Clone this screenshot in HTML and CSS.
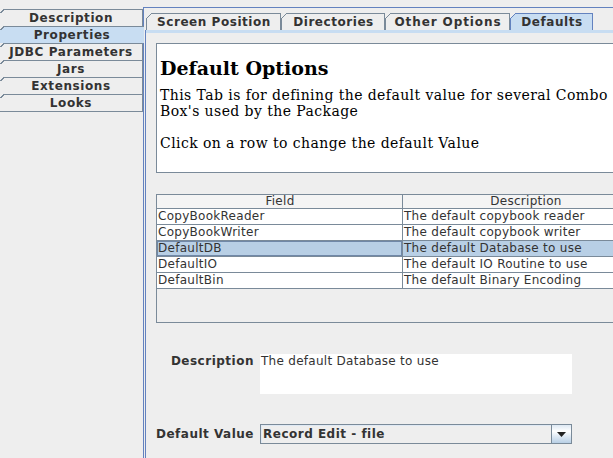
FILE: index.html
```html
<!DOCTYPE html>
<html>
<head>
<meta charset="utf-8">
<link rel="stylesheet" href="styles.css">
</head>
<body>
<div class="app">
  <div class="side-tabs">
    <div class="vtab">Description</div>
    <div class="vtab selected">Properties</div>
    <div class="vtab">JDBC Parameters</div>
    <div class="vtab">Jars</div>
    <div class="vtab">Extensions</div>
    <div class="vtab last">Looks</div>
  </div>
  <div class="outer">
    <div class="htabs">
      <div class="htab tab-screen">Screen Position</div>
      <div class="htab tab-dirs">Directories</div>
      <div class="htab tab-other">Other Options</div>
      <div class="htab tab-defaults selected">Defaults</div>
    </div>
    <div class="pane-body">
      <div class="band"></div>
      <div class="content">
        <div class="doc">
          <h1>Default Options</h1>
          <p>This Tab is for defining the default value for several Combo<br>Box's used by the Package</p>
          <p>Click on a row to change the default Value</p>
        </div>
        <div class="grid-wrap">
          <div class="row head">
            <div class="cell">Field</div>
            <div class="cell">Description</div>
          </div>
          <div class="row">
            <div class="cell">CopyBookReader</div>
            <div class="cell">The default copybook reader</div>
          </div>
          <div class="row">
            <div class="cell">CopyBookWriter</div>
            <div class="cell">The default copybook writer</div>
          </div>
          <div class="row sel">
            <div class="cell focus">DefaultDB</div>
            <div class="cell">The default Database to use</div>
          </div>
          <div class="row">
            <div class="cell">DefaultIO</div>
            <div class="cell">The default IO Routine to use</div>
          </div>
          <div class="row">
            <div class="cell">DefaultBin</div>
            <div class="cell">The default Binary Encoding</div>
          </div>
        </div>
        <div class="field-row desc-row">
          <div class="label">Description</div>
          <div class="textarea">The default Database to use</div>
        </div>
        <div class="field-row value-row">
          <div class="label">Default Value</div>
          <div class="combo">
            <div class="combo-text">Record Edit - file</div>
            <div class="combo-btn">
              <svg width="9" height="5" viewBox="0 0 9 5"><path d="M0 0H9L4.5 5Z" fill="#222"/></svg>
            </div>
          </div>
        </div>
      </div>
    </div>
  </div>
</div>
</body>
</html>
```
FILE: styles.css
```css
* { box-sizing: border-box; }
html, body { margin: 0; padding: 0; }
body {
  width: 613px;
  height: 458px;
  overflow: hidden;
  background: #eeeeee;
  font-family: "DejaVu Sans", sans-serif;
  font-size: 12px;
  letter-spacing: 0.28px;
  color: #333333;
}
.app { display: flex; height: 458px; }

/* left tabs */
.side-tabs {
  width: 143px;
  flex: none;
  padding-top: 9px;
  display: flex;
  flex-direction: column;
}
.vtab {
  position: relative;
  height: 17px;
  border-top: 1px solid #7a8a99;
  border-right: 1px solid #7a8a99;
  font-weight: bold;
  letter-spacing: 0.6px;
  text-align: center;
  line-height: 16px;
  white-space: nowrap;
}
.vtab::before {
  content: "";
  position: absolute;
  top: -1px;
  left: 0;
  width: 4px;
  height: 4px;
  background: linear-gradient(135deg, #eeeeee 0 40%, #7a8a99 40% 65%, transparent 65%);
}
.vtab.last { border-bottom: 1px solid #7a8a99; height: 18px; }
.vtab.selected {
  background: #c8ddf2;
  border-right: none;
  margin-right: -1px;
  z-index: 1;
}

/* outer content */
.outer {
  flex: none;
  width: 530px;
  margin-top: 7px;
  border-top: 1px solid #6382bf;
  border-left: 1px solid #6382bf;
  display: flex;
  flex-direction: column;
}
.htabs { display: flex; padding: 5px 0 0 2px; }
.htab {
  position: relative;
  height: 17px;
  border: 1px solid #7a8a99;
  border-bottom: none;
  padding: 0 0 0 1px;
  font-weight: bold;
  letter-spacing: 0.55px;
  line-height: 16px;
  text-align: center;
  white-space: nowrap;
}
.tab-screen { width: 135px; }
.tab-dirs { width: 104px; }
.tab-other { width: 125px; letter-spacing: 0.9px; }
.tab-defaults { width: 83px; }
.htab::before {
  content: "";
  position: absolute;
  top: -1px;
  left: -1px;
  width: 6px;
  height: 6px;
  background: linear-gradient(135deg, #eeeeee 0 42%, #7a8a99 42% 58%, transparent 58%);
}
.htab.selected { background: #c8ddf2; border-color: #6382bf; }
.htab.selected::before {
  background: linear-gradient(135deg, #eeeeee 0 42%, #6382bf 42% 58%, transparent 58%);
}

.pane-body {
  flex: 1;
  margin-left: 1px;
  border-left: 1px solid #6382bf;
}
.band { height: 3px; background: #c8ddf2; }
.content { padding: 10px 0 0 10px; }

/* html doc pane */
.doc {
  height: 130px;
  width: 520px;
  border: 1px solid #7a8a99;
  border-right: none;
  background: #ffffff;
  padding: 0 0 0 3px;
  font-family: "DejaVu Serif", serif;
  letter-spacing: 0;
  color: #000000;
}
.doc h1 {
  font-size: 19px;
  line-height: 22px;
  margin: 13px 0 8px 0;
}
.doc p {
  font-size: 14px;
  letter-spacing: 0.42px;
  line-height: 16px;
  margin: 0 0 16px 0;
  white-space: nowrap;
}

/* table */
.grid-wrap {
  margin-top: 21px;
  width: 520px;
  height: 129px;
  border: 1px solid #7a8a99;
  border-right: none;
  background: #eeeeee;
}
.row {
  display: flex;
  height: 16px;
  border-bottom: 1px solid #7a8a99;
  background: #ffffff;
}
.cell {
  width: 246px;
  flex: none;
  border-right: 1px solid #7a8a99;
  padding-left: 1px;
  line-height: 15px;
  white-space: nowrap;
  overflow: hidden;
}
.row.head { height: 14px; background: #f4f4f4; }
.row.head .cell { text-align: center; line-height: 13px; }
.row.sel { background: #b8cfe5; }
.cell.focus { box-shadow: inset 0 0 0 1px #7088a8; }

/* form */
.field-row { display: flex; }
.label {
  width: 98px;
  flex: none;
  text-align: right;
  font-weight: bold;
  letter-spacing: 0.5px;
  margin-right: 6px;
  line-height: 15px;
  white-space: nowrap;
}
.desc-row { margin-top: 31px; align-items: flex-start; }
.textarea {
  width: 312px;
  height: 40px;
  background: #ffffff;
  padding-left: 1px;
  line-height: 15px;
}
.value-row { margin-top: 30px; align-items: center; }
.combo {
  width: 312px;
  height: 20px;
  display: flex;
  border: 1px solid #7a8a99;
}
.combo-text {
  flex: 1;
  background: #eeeeee;
  box-shadow: inset 1px 1px 0 #dfe9f4;
  font-weight: bold;
  letter-spacing: 0.5px;
  line-height: 18px;
  padding-left: 2px;
  white-space: nowrap;
}
.combo-btn {
  width: 20px;
  flex: none;
  border-left: 1px solid #7a8a99;
  background: linear-gradient(#dde8f3, #ffffff 35%, #dde8f3 65%, #b8cfe5);
  display: flex;
  align-items: center;
  justify-content: center;
}
.combo-btn svg { display: block; }
```
